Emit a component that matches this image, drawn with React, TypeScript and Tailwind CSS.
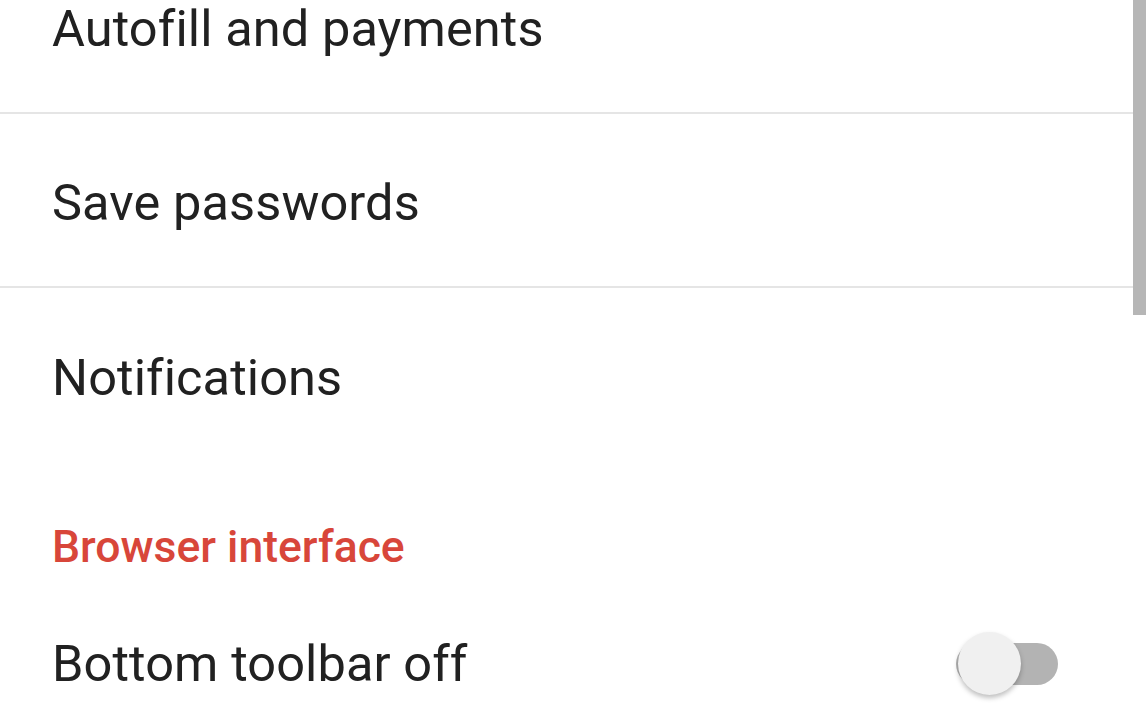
import { useState } from 'react';

const links = ['Autofill and payments', 'Save passwords', 'Notifications'];

export default function App() {
  const [bottomBar, setBottomBar] = useState(false);

  return (
    <div className="relative w-[1146px] h-[716px] overflow-hidden bg-white font-['Roboto',sans-serif] text-[#212121]">
      <div className="-mt-[60px]">
        {links.map((label, i) => (
          <div
            key={label}
            className={
              i < links.length - 1
                ? 'flex h-[174px] items-center border-b-2 border-[#e5e5e5] pl-[52px] pt-[6px]'
                : 'flex h-[174px] items-center pl-[52px] pt-[6px]'
            }
          >
            <span className="text-[50.5px] leading-none tracking-[0.1px]">{label}</span>
          </div>
        ))}

        {/* Section header */}
        <div className="pl-[52px] pt-[62px]">
          <span className="block text-[44.5px] font-medium leading-[46px] text-[#d8463a]">Browser interface</span>
        </div>

        <div className="flex h-[188px] items-center justify-between pl-[52px] pr-[88px]">
          <span className="text-[50.5px] leading-none tracking-[0.1px]">Bottom toolbar off</span>
          <button
            onClick={() => setBottomBar((v) => !v)}
            className="relative flex h-[64px] w-[102px] items-center"
          >
            <span className={bottomBar ? 'h-[42px] w-full rounded-full bg-[#e9a8a2]' : 'h-[42px] w-full rounded-full bg-[#b3b3b3]'} />
            <span
              className={
                bottomBar
                  ? 'absolute left-[39px] top-0 h-[63px] w-[63px] rounded-full bg-[#d8463a] shadow-[0_3px_5px_rgba(0,0,0,0.25)]'
                  : 'absolute left-[2px] top-0 h-[63px] w-[63px] rounded-full bg-[#f0f0f0] shadow-[0_3px_5px_rgba(0,0,0,0.25)]'
              }
            />
          </button>
        </div>
      </div>

      {/* scrollbar */}
      <div className="absolute right-0 top-0 h-[315px] w-[13px] bg-[#b6b6b6]" />
    </div>
  );
}
